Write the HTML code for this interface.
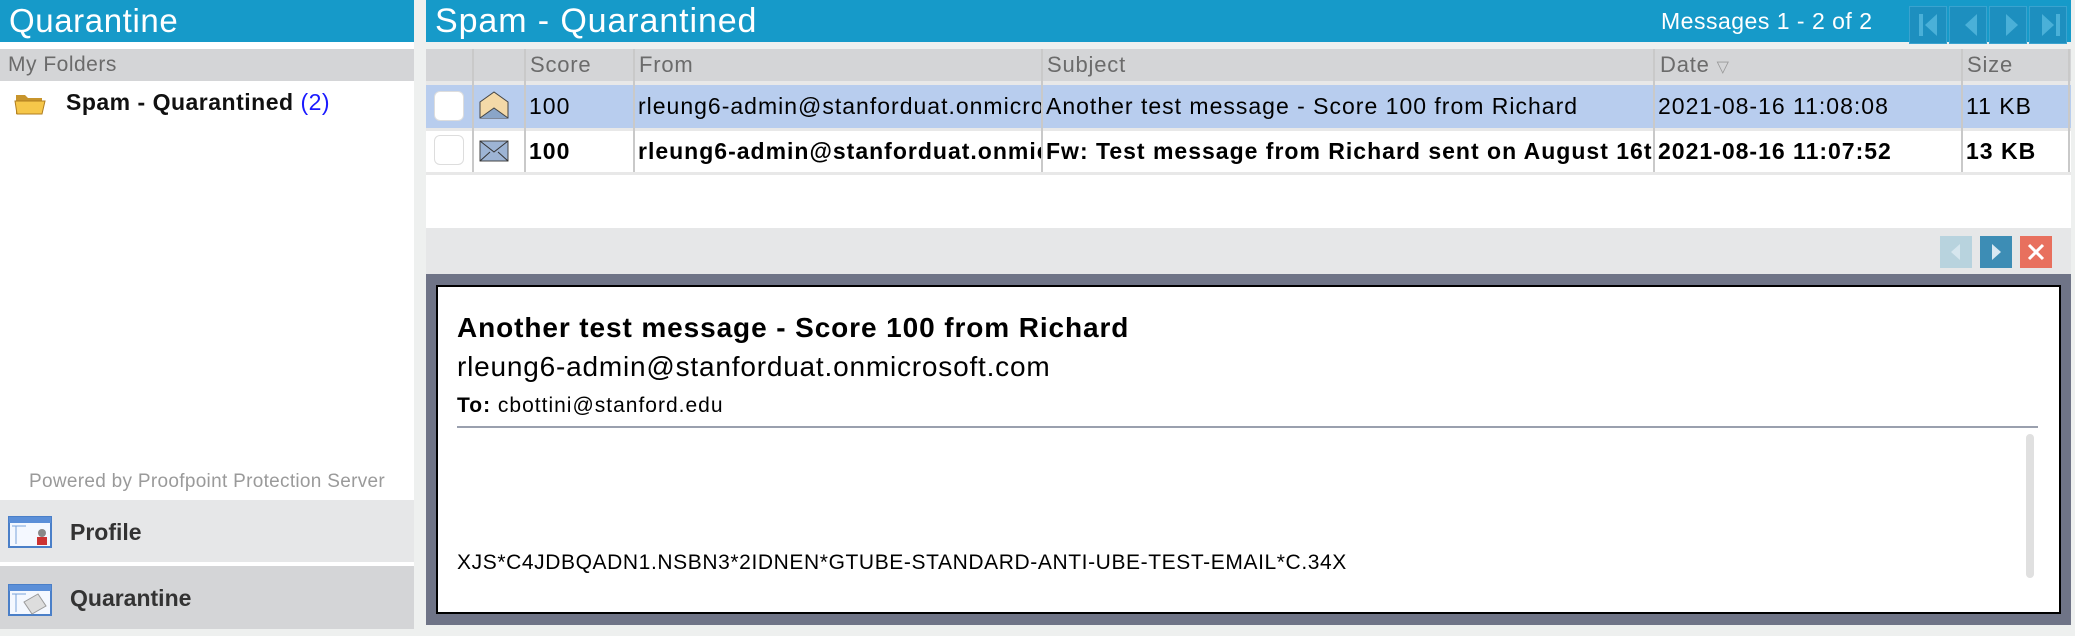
<!DOCTYPE html>
<html><head><style>
*{margin:0;padding:0;box-sizing:border-box}
body{width:2075px;height:636px;background:#eef0ef;font-family:"Liberation Sans","DejaVu Sans",sans-serif;position:relative;overflow:hidden}
.abs{position:absolute}
.hdr{background:#169ac9;color:#fff;font-size:33px;height:42px;line-height:42px;padding-left:9px;letter-spacing:0.6px}
.gbar{background:#d4d5d7;color:#6b6b6b;font-size:21px}
.tbl div,.tbl svg{position:absolute;white-space:nowrap;overflow:hidden}
.vl{width:2px;background:#c9c9c9}
.cell{font-size:23px;line-height:43px;color:#000;padding-left:5px;letter-spacing:1px}
.hc{font-size:22px;line-height:32px;color:#6b6b6b;letter-spacing:0.8px}
.b{font-weight:bold}
.nav{width:38px;height:38px;background:#1d8fbf;border:1px solid #3aa3cf}
</style></head><body>
<div class="abs" style="left:0;top:0;width:414px;height:629px;background:#fff"></div>
<div class="abs hdr" style="left:0;top:0;width:414px">Quarantine</div>
<div class="abs gbar" style="left:0;top:49px;width:414px;height:32px;line-height:32px;padding-left:8px;letter-spacing:0.5px">My Folders</div>
<svg class="abs" style="left:14px;top:92px" width="32" height="24" viewBox="0 0 32 24"><path d="M2 3h9l3 3h14v16H2z" fill="#c8952c"/><path d="M1 9h30l-3 13H3z" fill="#f6c74a" stroke="#b07e20"/></svg>
<div class="abs" style="left:66px;top:89px;font-size:23px;font-weight:bold;color:#111;letter-spacing:0.5px">Spam - Quarantined <span style="color:#1a1aff;font-weight:normal">(2)</span></div>
<div class="abs" style="left:0;top:471px;width:414px;text-align:center;font-size:19px;color:#9a9a9a;letter-spacing:0.3px">Powered by Proofpoint Protection Server</div>
<div class="abs" style="left:0;top:500px;width:414px;height:62px;background:#e6e7e8"></div>
<div class="abs" style="left:0;top:566px;width:414px;height:63px;background:#d4d5d7"></div>
<svg class="abs" style="left:8px;top:516px" width="44" height="32"><rect x="1" y="1" width="42" height="30" fill="#f4f8ff" stroke="#4a7fc8" stroke-width="2"/><rect x="1" y="1" width="42" height="6" fill="#5b8fd8"/><path d="M4 10h14M8 10v18" stroke="#7aa3db" fill="none"/><circle cx="34" cy="17" r="4" fill="#888"/><rect x="29" y="21" width="10" height="8" fill="#c33"/></svg>
<div class="abs" style="left:70px;top:519px;font-size:23px;font-weight:bold;color:#333">Profile</div>
<svg class="abs" style="left:8px;top:584px" width="44" height="32"><rect x="1" y="1" width="42" height="30" fill="#f4f8ff" stroke="#4a7fc8" stroke-width="2"/><rect x="1" y="1" width="42" height="6" fill="#5b8fd8"/><path d="M4 10h14M8 10v18" stroke="#7aa3db" fill="none"/><path d="M16 18l14-8 8 12-14 8z" fill="#ddd" stroke="#999"/></svg>
<div class="abs" style="left:70px;top:585px;font-size:23px;font-weight:bold;color:#333">Quarantine</div>

<div class="abs hdr" style="left:426px;top:0;width:1645px;font-size:34px;letter-spacing:0.9px">Spam - Quarantined</div>
<div class="abs" style="left:1661px;top:8px;font-size:23px;color:#fff;letter-spacing:0.5px">Messages 1 - 2 of 2</div>
<div class="abs nav" style="left:1909px;top:6px"></div>
<div class="abs nav" style="left:1949px;top:6px"></div>
<div class="abs nav" style="left:1989px;top:6px"></div>
<div class="abs nav" style="left:2029px;top:6px"></div>
<svg class="abs" style="left:1909px;top:6px" width="160" height="38"><g fill="#4ab0d8"><rect x="10" y="8" width="4" height="22"/><path d="M28 8v22l-12-11z"/><path d="M68 8v22l-12-11z"/><path d="M97 8v22l12-11z"/><path d="M133 8v22l12-11z"/><rect x="147" y="8" width="4" height="22"/></g></svg>

<div class="abs" style="left:426px;top:49px;width:1645px;height:179px;background:#fff"></div>
<div class="abs gbar" style="left:426px;top:49px;width:1645px;height:32px"></div>
<div class="abs" style="left:426px;top:85px;width:1645px;height:43px;background:#b8cdee"></div>
<div class="abs" style="left:426px;top:81px;width:1645px;height:4px;background:#e8e8e8"></div>
<div class="abs" style="left:426px;top:128px;width:1645px;height:3px;background:#e8e8e8"></div>
<div class="abs" style="left:426px;top:172px;width:1645px;height:3px;background:#e8e8e8"></div>
<div class="tbl">
<div class="vl" style="left:472px;top:49px;height:123px"></div>
<div class="vl" style="left:524px;top:49px;height:123px"></div>
<div class="vl" style="left:633px;top:49px;height:123px"></div>
<div class="vl" style="left:1041px;top:49px;height:123px"></div>
<div class="vl" style="left:1653px;top:49px;height:123px"></div>
<div class="vl" style="left:1961px;top:49px;height:123px"></div>
<div class="vl" style="left:2068px;top:49px;height:123px"></div>
<div class="hc" style="left:530px;top:49px">Score</div>
<div class="hc" style="left:639px;top:49px">From</div>
<div class="hc" style="left:1047px;top:49px">Subject</div>
<div class="hc" style="left:1660px;top:49px">Date <span style="color:#999;font-size:16px">&#9661;</span></div>
<div class="hc" style="left:1967px;top:49px">Size</div>
<div style="left:434px;top:91px;width:30px;height:30px;border:1px solid #ddd;border-radius:6px;background:#fff"></div>
<div style="left:434px;top:135px;width:30px;height:30px;border:1px solid #ddd;border-radius:6px;background:#fff"></div>
<svg style="left:478px;top:90px" width="32" height="30"><path d="M2 12l14-10 14 10v16H2z" fill="#f4d9a8" stroke="#444"/><path d="M2 28l14-10 14 10" fill="#8aa5c8" stroke="#444"/></svg>
<svg style="left:478px;top:138px" width="32" height="26"><rect x="2" y="3" width="28" height="20" fill="#9db4d4" stroke="#444"/><path d="M2 3l14 11 14-11M2 23l10-9M30 23l-10-9" fill="none" stroke="#333"/></svg>
<div class="cell" style="left:524px;top:85px;width:109px">100</div>
<div class="cell" style="left:633px;top:85px;width:408px">rleung6-admin@stanforduat.onmicrosoft.com</div>
<div class="cell" style="left:1041px;top:85px;width:612px">Another test message - Score 100 from Richard</div>
<div class="cell" style="left:1653px;top:85px;width:308px">2021-08-16 11:08:08</div>
<div class="cell" style="left:1961px;top:85px;width:107px">11 KB</div>
<div class="cell b" style="left:524px;top:130px;width:109px">100</div>
<div class="cell b" style="left:633px;top:130px;width:408px">rleung6-admin@stanforduat.onmicrosoft.com</div>
<div class="cell b" style="left:1041px;top:130px;width:612px">Fw: Test message from Richard sent on August 16th</div>
<div class="cell b" style="left:1653px;top:130px;width:308px">2021-08-16 11:07:52</div>
<div class="cell b" style="left:1961px;top:130px;width:107px">13 KB</div>
</div>

<div class="abs" style="left:426px;top:228px;width:1645px;height:46px;background:#e6e7e8"></div>
<div class="abs" style="left:1940px;top:236px;width:32px;height:32px;background:#b8d3de"></div>
<div class="abs" style="left:1980px;top:236px;width:32px;height:32px;background:#3d8db5"></div>
<div class="abs" style="left:2020px;top:236px;width:32px;height:32px;background:#e8705e"></div>
<svg class="abs" style="left:1940px;top:236px" width="112" height="32"><path d="M20 8v16l-9-8z" fill="#d6e6ee"/><path d="M52 8v16l9-8z" fill="#d8e8f2"/><path d="M89 9l14 14M103 9l-14 14" stroke="#fff" stroke-width="3"/></svg>

<div class="abs" style="left:426px;top:274px;width:1645px;height:351px;background:#6f7487"></div>
<div class="abs" style="left:436px;top:285px;width:1625px;height:329px;background:#fff;border:2px solid #000"></div>
<div class="abs" style="left:457px;top:312px;font-size:28px;font-weight:bold;color:#000;letter-spacing:0.9px">Another test message - Score 100 from Richard</div>
<div class="abs" style="left:457px;top:351px;font-size:28px;color:#000;letter-spacing:0.8px">rleung6-admin@stanforduat.onmicrosoft.com</div>
<div class="abs" style="left:457px;top:394px;font-size:21px;color:#000;letter-spacing:1px"><b>To:</b> cbottini@stanford.edu</div>
<div class="abs" style="left:457px;top:426px;width:1581px;height:2px;background:#9aa0ae"></div>
<div class="abs" style="left:2026px;top:434px;width:8px;height:144px;background:#e0e0e0;border-radius:4px"></div>
<div class="abs" style="left:457px;top:551px;font-size:21px;color:#000;letter-spacing:0.6px">XJS*C4JDBQADN1.NSBN3*2IDNEN*GTUBE-STANDARD-ANTI-UBE-TEST-EMAIL*C.34X</div>
</body></html>
